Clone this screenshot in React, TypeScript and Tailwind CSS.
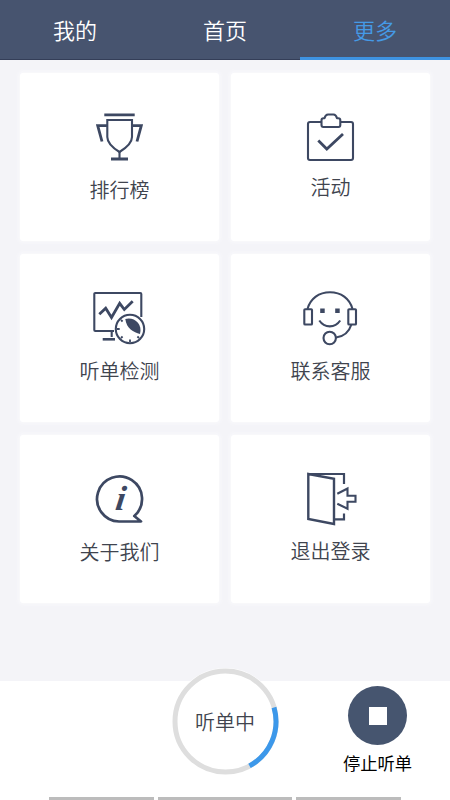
import type { ReactNode } from "react";
import { cx } from "class-variance-authority";

const tabs = [
  { name: "我的", active: false },
  { name: "首页", active: false },
  { name: "更多", active: true },
];

function Icon({ children }: { children: ReactNode }) {
  return (
    <svg
      viewBox="0 0 60 60"
      className="h-[60px] w-[60px] shrink-0 text-[#3d4862]"
      fill="none"
      stroke="currentColor"
      strokeWidth="2.1"
    >
      {children}
    </svg>
  );
}

function TrophyIcon() {
  return (
    <Icon>
      <path d="M14.3 9.8H44.7M21 54H38" strokeWidth="2.8" />
      <path d="M17.3 15H42V32C42 38 36 43 29.5 47C23 43 17.3 38 17.3 32Z" />
      <path d="M29.5 46V54" />
      <path d="M17.3 20.7H7.7L12 36.5M42 20.7H51.3L47 36.5" strokeWidth="2.8" />
    </Icon>
  );
}

function ActivityIcon() {
  return (
    <Icon>
      <path d="M20.5 17H9Q7 17 7 19V53Q7 55 9 55H50Q52 55 52 53V19Q52 17 50 17H39.5" />
      <path
        d="M22.3 22Q20.5 22 20.5 20V15.3Q20.5 13.3 22.5 13.3H23.5Q24.5 9.5 27 9.5H32.5Q35 9.5 36 13.3H37.3Q39.3 13.3 39.3 15.3V20Q39.3 22 37.5 22Z"
        strokeLinejoin="round"
      />
      <path d="M17.3 35.5L25.8 44L42 29" strokeWidth="2.8" />
    </Icon>
  );
}

function MonitorIcon() {
  return (
    <Icon>
      <path d="M51.3 30V7Q51.3 6 50.3 6H5.3Q4.3 6 4.3 7V43Q4.3 44 5.3 44H24M21.7 44V50" />
      <path d="M12.7 52.3H25" strokeWidth="2.6" />
      <path d="M9.3 27.3L15.7 21.3L21.5 30.5L29.7 16.3L34.3 22.5L42.7 14.3" strokeWidth="2.8" />
      <circle cx="40" cy="42" r="14.2" />
      <path
        d="M40 52.5V55M27 42H29.7M31 33L32.6 34.5M31 51L32.6 49.5M49 51L47.4 49.5"
        strokeWidth="1.8"
      />
      <path d="M35.3 32C43 29.5 53 36 50 47C43.5 45.5 36.5 41.5 35.3 32Z" fill="currentColor" stroke="none" />
    </Icon>
  );
}

function ServiceIcon() {
  return (
    <Icon>
      <rect x="3.3" y="22.3" width="7.7" height="15.2" rx=".8" />
      <rect x="47.3" y="22.3" width="7.7" height="15.2" rx=".8" />
      <path d="M6.5 22C9.5 11.5 18 5.3 29 5.3S48.5 11.5 51.5 22" />
      <path d="M19.2 21.5H23.7V26H19.2ZM34.2 21.5H38.7V26H34.2Z" fill="currentColor" stroke="none" />
      <path d="M18.3 33.5C23.5 41.3 34 41.3 39.2 33.5" />
      <circle cx="28.7" cy="51" r="6.2" />
      <path d="M35 50.5C42.5 49.5 48 45 50.3 37.7" />
    </Icon>
  );
}

function AboutIcon() {
  return (
    <Icon>
      <path
        d="M29 51.5A22.5 22.5 0 1 1 44.3 46L51 51.5Z"
        strokeWidth="2.7"
        strokeLinejoin="round"
      />
      <text
        x="29.5"
        y="40"
        textAnchor="middle"
        fill="currentColor"
        stroke="none"
        transform="translate(5.5 0) skewX(-8)"
        className="font-['Liberation_Serif',serif] text-[35px] font-bold italic"
      >
        i
      </text>
    </Icon>
  );
}

function LogoutIcon() {
  return (
    <Icon>
      <path d="M7.3 4L33 8.7V54L7.3 49Z" strokeWidth="2.4" />
      <path d="M7.3 4H43V14M43 43.5V49.3H33" strokeWidth="2.2" />
      <path d="M36.3 23.7L46.5 18.5V25.7H54.5V31.7H46.5V38.7L36.3 33.7" />
    </Icon>
  );
}

const menu = [
  { name: "排行榜", icon: TrophyIcon, className: "pt-8", label: "mt-[10px]" },
  { name: "活动", icon: ActivityIcon, className: "pt-8", label: "mt-[7px]" },
  { name: "听单检测", icon: MonitorIcon, className: "pt-[33px]", label: "mt-[9px]" },
  { name: "联系客服", icon: ServiceIcon, className: "pt-[33px]", label: "mt-[9px]" },
  { name: "关于我们", icon: AboutIcon, className: "pt-[35px]", label: "mt-[7px]" },
  { name: "退出登录", icon: LogoutIcon, className: "pt-[35px]", label: "mt-[6px]" },
];

export default function App() {
  return (
    <div className="flex h-[800px] w-[450px] flex-col overflow-hidden bg-[#f4f4f8] font-['Noto_Sans_CJK_SC',sans-serif]">
      <nav className="grid h-[60px] shrink-0 grid-cols-3 bg-[#47546f]">
        {tabs.map((tab) => (
          <button
            key={tab.name}
            className={cx(
              "flex items-center justify-center text-[22px] leading-none font-[350]",
              tab.active
                ? "border-b-[3px] border-[#3e93e2] text-[#459ae6]"
                : "border-b border-[#343e58] pb-[2px] text-white"
            )}
          >
            {tab.name}
          </button>
        ))}
      </nav>

      <main className="grid h-[621px] shrink-0 grid-cols-[199px_199px] grid-rows-[168px_168px_168px] gap-x-[12px] gap-y-[13px] pl-5 pt-[13px]">
        {menu.map((item) => (
          <button
            key={item.name}
            className={cx(
              "flex flex-col items-center rounded-[3px] bg-white shadow-[0_0_3px_2px_#f8f8fb]",
              item.className
            )}
          >
            <item.icon />
            <span className={cx("text-[20px] leading-[30px] font-[350] text-[#40444e]", item.label)}>
              {item.name}
            </span>
          </button>
        ))}
      </main>

      <footer className="flex h-[119px] flex-col bg-white">
        <div className="grid h-[116px] shrink-0 grid-cols-3">
          <div />
          <div className="relative -mt-[13px] flex h-[107px] w-[107px] items-center justify-center justify-self-center rounded-full bg-white">
            <svg viewBox="-53.5 -53.5 107 107" className="absolute inset-0" fill="none" strokeWidth="5">
              <circle r="50.5" stroke="#dedede" />
              <path d="M48.5 -14A50.5 50.5 0 0 1 24 44.4" stroke="#3c98ea" />
            </svg>
            <span className="text-[20px] leading-none font-[350] text-[#40444e]">听单中</span>
          </div>
          <button className="flex w-[155px] flex-col items-center pt-[5px]">
            <span className="flex h-[59px] w-[59px] items-center justify-center rounded-full bg-[#46556f]">
              <span className="h-[18px] w-[18px] bg-white" />
            </span>
            <span className="mt-[6px] text-[17.3px] leading-6 text-black">停止听单</span>
          </button>
        </div>
        <div className="flex h-[3px] gap-[4px] pl-[49px]">
          <div className="w-[105px] bg-[#bcbcbc]" />
          <div className="w-[134px] bg-[#bcbcbc]" />
          <div className="w-[105px] bg-[#bcbcbc]" />
        </div>
      </footer>
    </div>
  );
}
